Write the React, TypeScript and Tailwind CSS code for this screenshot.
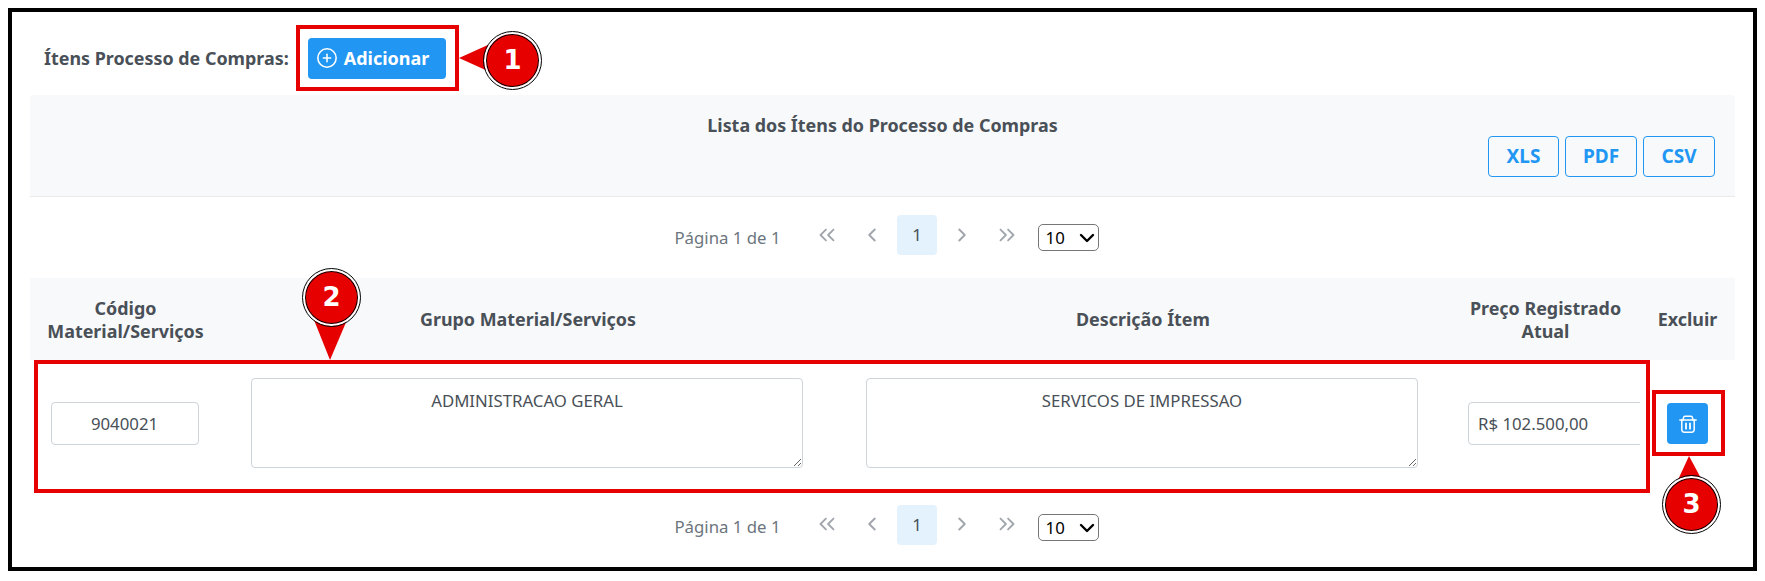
import React from 'react';
import { ChevronDown, ChevronLeft, ChevronRight, ChevronsLeft, ChevronsRight, CirclePlus } from 'lucide-react';

const Paginator = () => (
  <div className="flex items-center justify-center h-full text-[#6c757d] pl-[8px]">
    <span className="text-[16.8px] mr-[24px]">Página 1 de 1</span>
    <button className="w-[40px] h-[40px] mx-[2.5px] -mt-[6px] flex items-center justify-center text-[#a0a6ac]"><ChevronsLeft size={26} strokeWidth={1.7} /></button>
    <button className="w-[40px] h-[40px] mx-[2.5px] -mt-[6px] flex items-center justify-center text-[#a0a6ac]"><ChevronLeft size={22} strokeWidth={2.1} /></button>
    <button className="w-[40px] h-[40px] mx-[2.5px] -mt-[5px] rounded-[4px] bg-[#e3f2fd] text-[#495057] text-[16.8px]">1</button>
    <button className="w-[40px] h-[40px] mx-[2.5px] -mt-[6px] flex items-center justify-center text-[#a0a6ac]"><ChevronRight size={22} strokeWidth={2.1} /></button>
    <button className="w-[40px] h-[40px] mx-[2.5px] -mt-[6px] flex items-center justify-center text-[#a0a6ac]"><ChevronsRight size={26} strokeWidth={1.7} /></button>
    <div className="relative ml-[8px] w-[61px] h-[27px]">
      <select defaultValue="10" className="appearance-none w-full h-full border border-[#767676] rounded-[5px] bg-white text-black text-[16.8px] pl-[7px]">
        <option value="10">10</option>
      </select>
      <ChevronDown size={24} strokeWidth={2.4} className="absolute right-0 top-[2px] text-black pointer-events-none" />
    </div>
  </div>
);

const Badge = ({ n, className }: { n: number; className: string }) => (
  <div className={`absolute w-[57px] h-[57px] rounded-full bg-[#e60000] border-2 border-white outline-1 outline-black ring-1 ring-inset ring-black flex items-center justify-center text-white font-bold font-['DejaVu_Sans',sans-serif] text-[26px] ${className}`}>
    {n}
  </div>
);

const TrashIcon = () => (
  <svg width="18" height="18" viewBox="0 0 18 18" fill="none" stroke="currentColor" strokeWidth="1.5" strokeLinecap="round" strokeLinejoin="round">
    <path d="M0.8 5h16.4" />
    <path d="M4 5l0.6-2.6a1.5 1.5 0 0 1 1.4-1.2h6a1.5 1.5 0 0 1 1.4 1.2L14 5" />
    <path d="M2.8 5v9.8a2.4 2.4 0 0 0 2.4 2.4h7.6a2.4 2.4 0 0 0 2.4-2.4V5" />
    <path d="M7 8.5v5.2" strokeWidth="1.8" />
    <path d="M11 8.5v5.2" strokeWidth="1.8" />
  </svg>
);

export default function App() {
  return (
    <div className="relative w-[1765px] h-[581px] p-2 bg-white font-['Noto_Sans','Open_Sans',sans-serif]">
      <div className="h-[563px] border-4 border-black px-[18px]">
        <div className="h-[83px] flex items-center pl-[14px] pt-[9px] gap-[19px]">
          <span className="font-bold text-[17.9px] text-[#495057]">Ítens Processo de Compras:</span>
          <button className="w-[138px] h-[41px] rounded-[4px] bg-[#2196f3] text-white font-bold text-[18px] flex items-center pl-[8px] gap-[6px]">
            <CirclePlus size={22} strokeWidth={1.7} />
            Adicionar
          </button>
        </div>

        <div className="h-[102px] bg-[#f8f9fa] border-b border-[#e9ecef] rounded-t-[4px] relative">
          <div className="text-center font-bold text-[17.9px] text-[#495057] pt-[17px]">Lista dos Ítens do Processo de Compras</div>
          <div className="absolute right-[20px] top-[41px] flex gap-[6px] text-[#2196f3] font-bold text-[19px]">
            <button className="w-[71px] h-[41px] border border-[#2196f3] rounded-[4px]">XLS</button>
            <button className="w-[72px] h-[41px] border border-[#2196f3] rounded-[4px]">PDF</button>
            <button className="w-[72px] h-[41px] border border-[#2196f3] rounded-[4px]">CSV</button>
          </div>
        </div>

        <div className="h-[81px]"><Paginator /></div>

        <table className="w-full table-fixed border-collapse">
          <colgroup>
            <col className="w-[193px]" />
            <col className="w-[610px]" />
            <col className="w-[620px]" />
            <col className="w-[187px]" />
            <col className="w-[95px]" />
          </colgroup>
          <thead>
            <tr className="h-[82px] bg-[#f8f9fa] text-[#495057] text-[17.9px] font-bold text-center leading-[23px]">
              <th className="pr-[2px] pt-[1px]">Código<br />Material/Serviços</th>
              <th className="pt-[1px]">Grupo Material/Serviços</th>
              <th className="pt-[1px]">Descrição Ítem</th>
              <th className="pr-[2px] pt-[1px]">Preço Registrado<br />Atual</th>
              <th className="pt-[1px]">Excluir</th>
            </tr>
          </thead>
          <tbody>
            <tr className="h-[133px] text-[#495057] text-[16.8px]">
              <td className="text-center pr-[4px] pb-[6px]">
                <input readOnly value="9040021" className="w-[148px] h-[43px] mx-auto block border border-[#ced4da] rounded-[4px] text-center px-2" />
              </td>
              <td className="pr-[2px] pb-[8px]">
                <textarea readOnly value="ADMINISTRACAO GERAL" className="w-[552px] h-[90px] mx-auto block border border-[#ced4da] rounded-[4px] text-center px-2 pt-[9px]" />
              </td>
              <td className="pr-[2px] pb-[8px]">
                <textarea readOnly value="SERVICOS DE IMPRESSAO" className="w-[552px] h-[90px] mx-auto block border border-[#ced4da] rounded-[4px] text-center px-2 pt-[9px]" />
              </td>
              <td className="pl-[15px] pb-[6px] overflow-hidden">
                <input readOnly value="R$ 102.500,00" className="w-[200px] h-[43px] block border border-[#ced4da] rounded-[4px] px-[9px]" />
              </td>
              <td className="pb-[6px]">
                <button className="w-[41px] h-[41px] mx-auto flex items-center justify-center rounded-[4px] bg-[#2196f3] text-white"><TrashIcon /></button>
              </td>
            </tr>
          </tbody>
        </table>

        <div className="h-[68px]"><Paginator /></div>
      </div>

      {/* callouts */}
      <div className="absolute left-[296px] top-[25px] w-[163px] h-[66px] border-4 border-[#e60000]" />
      <div className="absolute left-[34px] top-[360px] w-[1616px] h-[133px] border-4 border-[#e60000]" />
      <div className="absolute left-[1652px] top-[390px] w-[73px] h-[66px] border-4 border-[#e60000]" />

      <svg className="absolute left-0 top-0" width="1765" height="581">
        <polygon points="459,58 490,44 490,72" fill="#e60000" />
        <polygon points="330,360 314,320 347,320" fill="#e60000" />
        <polygon points="1689,456 1677,482 1703,482" fill="#e60000" />
      </svg>

      <Badge n={1} className="left-[484px] top-[32px]" />
      <Badge n={2} className="left-[303px] top-[269px]" />
      <Badge n={3} className="left-[1663px] top-[476px]" />
    </div>
  );
}
